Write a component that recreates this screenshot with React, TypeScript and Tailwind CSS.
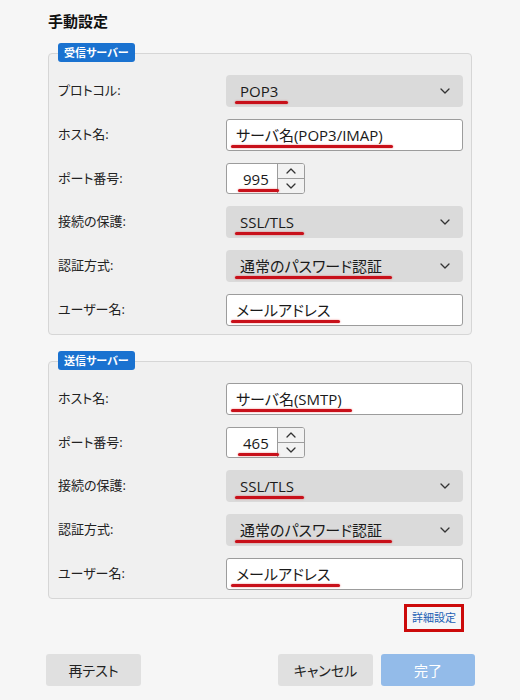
import React from "react";

const font = {
  fontFamily: '"Open Sans", "Noto Sans CJK JP", sans-serif',
};

function Mark({ children }: { children: React.ReactNode }) {
  return (
    <span className="relative inline-block leading-[20px]">
      {children}
      <span className="absolute left-[-5px] right-[-10px] bottom-[-3px] h-[3px] rounded-full bg-[#c8101a] shadow-[0_0_2px_rgba(220,0,0,0.5)]" />
    </span>
  );
}

function Chevron() {
  return (
    <svg width="10" height="6" viewBox="0 0 10 6" className="shrink-0">
      <path d="M1 1 L5 5 L9 1" fill="none" stroke="#333" strokeWidth="1.3" strokeLinecap="round" strokeLinejoin="round" />
    </svg>
  );
}

function Row({ label, h = "h-[32px]", children }: { label: string; h?: string; children: React.ReactNode }) {
  return (
    <div className={`flex items-center ${h}`}>
      <div className="w-[168px] text-[13px] text-[#222] [font-feature-settings:'palt']">{label}</div>
      <div className="flex-1 h-full">{children}</div>
    </div>
  );
}

function Select({ value }: { value: string }) {
  return (
    <div className="flex h-full items-center justify-between rounded-[4px] bg-[#dadada] pl-[14px] pr-[13px] text-[15px] text-[#1a1a1a]">
      <Mark>{value}</Mark>
      <Chevron />
    </div>
  );
}

function Input({ value }: { value: string }) {
  return (
    <div className="flex h-full items-center rounded-[3px] border border-[#9c9c9c] bg-white pl-[9px] text-[15px] text-[#1a1a1a]">
      <Mark>{value}</Mark>
    </div>
  );
}

function Spinner({ value }: { value: string }) {
  return (
    <div className="flex h-full w-[79px] rounded-[3px] border border-[#9c9c9c] bg-white overflow-hidden">
      <div className="flex flex-1 items-center pl-[16px] text-[15px] text-[#1a1a1a]">
        <Mark>{value}</Mark>
      </div>
      <div className="flex w-[27px] flex-col border-l border-[#9c9c9c] bg-[#f2f2f2]">
        <div className="flex flex-1 items-center justify-center border-b border-[#9c9c9c]">
          <svg width="10" height="6" viewBox="0 0 10 6">
            <path d="M1 5 L5 1 L9 5" fill="none" stroke="#333" strokeWidth="1.3" strokeLinecap="round" strokeLinejoin="round" />
          </svg>
        </div>
        <div className="flex flex-1 items-center justify-center">
          <svg width="10" height="6" viewBox="0 0 10 6">
            <path d="M1 1 L5 5 L9 1" fill="none" stroke="#333" strokeWidth="1.3" strokeLinecap="round" strokeLinejoin="round" />
          </svg>
        </div>
      </div>
    </div>
  );
}

function Group({ title, children, className = "" }: { title: string; children: React.ReactNode; className?: string }) {
  return (
    <div className={`relative rounded-[4px] border border-[#d6d6d6] bg-[#f0f0f0] pl-[9px] pr-[8px] pt-[21px] pb-[8px] ${className}`}>
      <div className="absolute left-[9px] top-[-11px] flex h-[19px] items-center rounded-[3px] bg-[#1a72d0] px-[6px] text-[11px] font-bold leading-none text-white [font-feature-settings:'palt']">
        {title}
      </div>
      <div className="flex flex-col gap-[12px]">{children}</div>
    </div>
  );
}

export default function App() {
  return (
    <div style={font} className="min-h-[700px] w-[520px] bg-[#f6f6f6] px-[48px] pt-[11px] [font-feature-settings:'palt']">
      <div className="h-[20px] text-[15px] font-bold leading-[20px] text-[#111]">手動設定</div>

      <Group title="受信サーバー" className="mt-[22px]">
        <Row label="プロトコル:"><Select value="POP3" /></Row>
        <Row label="ホスト名:"><Input value="サーバ名(POP3/IMAP)" /></Row>
        <Row label="ポート番号:" h="h-[31px]"><Spinner value="995" /></Row>
        <Row label="接続の保護:"><Select value="SSL/TLS" /></Row>
        <Row label="認証方式:"><Select value="通常のパスワード認証" /></Row>
        <Row label="ユーザー名:"><Input value="メールアドレス" /></Row>
      </Group>

      <Group title="送信サーバー" className="mt-[26px]">
        <Row label="ホスト名:"><Input value="サーバ名(SMTP)" /></Row>
        <Row label="ポート番号:" h="h-[31px]"><Spinner value="465" /></Row>
        <Row label="接続の保護:"><Select value="SSL/TLS" /></Row>
        <Row label="認証方式:"><Select value="通常のパスワード認証" /></Row>
        <Row label="ユーザー名:"><Input value="メールアドレス" /></Row>
      </Group>

      <div className="mt-[5px] flex justify-end pr-[8px]">
        <div className="flex h-[28px] w-[60px] items-center justify-center border-[3px] border-[#cc0a0a] text-[11px] text-[#1a5fb4]">
          詳細設定
        </div>
      </div>

      <div className="ml-[-2px] mr-[-3px] mt-[22px] flex items-center">
        <button className="h-[32px] w-[95px] rounded-[3px] bg-[#e0e0e0] text-[14px] text-[#222]">再テスト</button>
        <div className="flex-1" />
        <button className="h-[32px] w-[95px] rounded-[3px] bg-[#e0e0e0] text-[14px] text-[#222]">キャンセル</button>
        <button className="ml-[8px] h-[32px] w-[94px] rounded-[3px] bg-[#93bbe9] text-[14px] text-white">完了</button>
      </div>
    </div>
  );
}
